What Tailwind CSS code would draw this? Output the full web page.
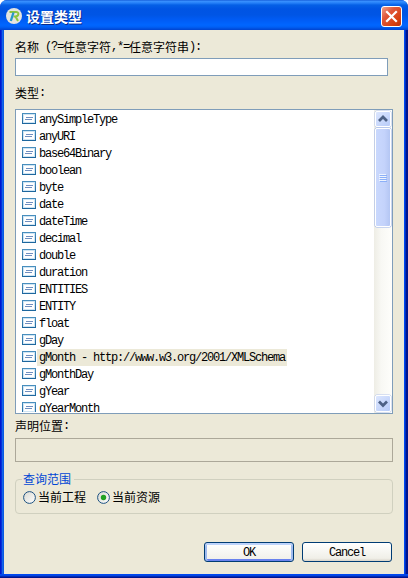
<!DOCTYPE html>
<html lang="zh">
<head>
<meta charset="utf-8">
<title>设置类型</title>
<script src="https://cdn.jsdelivr.net/npm/@tailwindcss/browser@4"></script>
</head>
<body class="w-[408px] h-[578px] overflow-hidden bg-white text-black text-[12px] leading-[14px] font-['Noto_Sans_CJK_SC',sans-serif]">
<svg width="0" height="0" class="absolute"><defs>
<linearGradient id="ib" x1="0" y1="0" x2="0" y2="1"><stop offset="0" stop-color="#4a90bf"/><stop offset="1" stop-color="#1b659c"/></linearGradient>
<linearGradient id="rb" x1="0" y1="0" x2="1" y2="1"><stop offset="0" stop-color="#d8d8d0"/><stop offset="1" stop-color="#fff"/></linearGradient>
<symbol id="type" viewBox="0 0 14 11"><rect width="14" height="11" fill="url(#ib)"/><rect x="1" y="1" width="12" height="9" fill="#cfe5f4"/><rect x="2" y="2" width="10" height="7" fill="#fff"/><path d="M4 4.500h7M3 6.500h7" stroke="#6f8fc0"/></symbol>
</defs></svg>
<div class="w-[408px] h-[578px] flex flex-col overflow-hidden rounded-t-[7px] bg-[linear-gradient(90deg,#0019cf_0,#0019cf_1px,#0831d9_1px,#0831d9_2px,#166aee_2px,#0855dd_4px,#0048f0_50%,#0048f0_405px,#001590_406px,#00138c_408px)]">
  <header class="h-[30px] shrink-0 flex items-center pl-[6px] pr-[6px] bg-[linear-gradient(180deg,#0a4fd0_0,#3c93ff_1px,#2580f8_3px,#0560e6_5px,#0054e3_9px,#0055e5_15px,#005cf5_20px,#0066ff_25px,#0060f5_27px,#0043cf_30px)]">
    <svg width="16" height="16" viewBox="0 0 16 16" class="mt-[2px] shrink-0"><circle cx="8" cy="8" r="8" fill="#e4e4e0"/><path d="M3.500 4h6.500c3.500 0 3 4-.5 4.500h-2M9.500 8.500l2.500 4.500" fill="none" stroke="#8cc63e" stroke-width="2"/><path d="M7.500 4.500L4.800 13" stroke="#2699c8" stroke-width="2.300"/></svg>
    <h1 class="ml-[4px] mt-[1px] text-[14px] leading-[16px] font-bold text-white [text-shadow:1px_1px_0_#0a2a8a]">设置类型</h1>
    <button class="ml-auto mt-[3px] w-[21px] h-[21px] shrink-0 rounded-[3px] border border-white bg-[linear-gradient(135deg,#f0a08a_0,#e0573a_35%,#d8400f_75%,#b83410_100%)]"><svg width="19" height="19" viewBox="0 0 19 19"><path d="M5 5l9 9M14 5l-9 9" stroke="#fff" stroke-width="2.200" stroke-linecap="square"/></svg></button>
  </header>
  <div class="h-[544px] shrink-0 ml-[4px] mr-[4px] bg-[#ece9d8] flex flex-col pl-[11px] pr-[11px] pt-[10px]">
    <label class="h-[14px] whitespace-pre flex"><span>名称</span><span class="mono"> (?=</span><span>任意字符</span><span class="mono">,*=</span><span>任意字符串</span><span class="mono">):</span></label>
    <input class="mt-[4px] w-[373px] h-[18px] border border-[#7f9db9] bg-white">
    <label class="mt-[10px] h-[14px] flex"><span>类型</span><span class="mono">:</span></label>
    <div class="mt-[9px] h-[305px] w-[378px] shrink-0 border border-[#7f9db9] bg-white flex">
      <ul id="list" class="flex-1 h-[302px] overflow-hidden pt-[1px] pl-[6px]"></ul>
      <div class="w-[18px] h-[303px] shrink-0 bg-[linear-gradient(90deg,#eeede5,#f8f8f4_40%,#fefefb)] flex flex-col justify-between">
        <div>
          <div class="ml-[1px] mt-[1px] w-[16px] h-[16px] rounded-[2px] border border-white bg-[linear-gradient(135deg,#dce6fe,#b8ccf9)] shadow-[0_0_0_0.5px_#b5c6ec]"><svg width="14" height="14" viewBox="0 0 14 14"><path d="M3 9l4-4 4 4" fill="none" stroke="#4d6185" stroke-width="2.700"/></svg></div>
          <div class="ml-[1px] mt-[1px] w-[16px] h-[99px] rounded-[2px] border border-white bg-[linear-gradient(90deg,#c9d8fd,#c4d3fb_60%,#b4c6f3)] shadow-[0_0_0_0.5px_#98b0e8] flex items-center justify-center"><svg width="8" height="8" viewBox="0 0 8 8"><path d="M0 .5h7M0 2.500h7M0 4.500h7M0 6.500h7" stroke="#eef4fe"/><path d="M1 1.500h7M1 3.500h7M1 5.500h7M1 7.500h7" stroke="#8cb0f8"/></svg></div>
        </div>
        <div class="ml-[1px] mb-[1px] w-[16px] h-[17px] rounded-[2px] border border-white bg-[linear-gradient(135deg,#dce6fe,#b8ccf9)] shadow-[0_0_0_0.5px_#b5c6ec]"><svg width="14" height="15" viewBox="0 0 14 15"><path d="M3 5.500l4 4 4-4" fill="none" stroke="#4d6185" stroke-width="2.700"/></svg></div>
      </div>
    </div>
    <label class="mt-[5px] h-[14px] flex"><span>声明位置</span><span class="mono">:</span></label>
    <div class="mt-[5px] h-[24px] w-[378px] shrink-0 border border-[#aca899]"></div>
    <fieldset class="mt-[10px] w-[378px] h-[42px] shrink-0 border border-[#d0d0bf] rounded-[4px] pl-[6px]">
      <legend class="pl-[1px] pr-[3px] h-[14px] text-[#0046d5]">查询范围</legend>
      <div class="flex items-center mt-[4px] h-[14px] pl-[1px]">
        <svg width="13" height="13" viewBox="0 0 13 13"><circle cx="6.500" cy="6.500" r="5.900" fill="url(#rb)" stroke="#1c5180"/></svg><span class="ml-[2px] w-[59px]">当前工程</span>
        <svg width="13" height="13" viewBox="0 0 13 13"><circle cx="6.500" cy="6.500" r="5.900" fill="url(#rb)" stroke="#1c5180"/><circle cx="6.500" cy="6.500" r="2.700" fill="#21a121"/></svg><span class="ml-[2px]">当前资源</span>
      </div>
    </fieldset>
    <div class="mt-[28px] ml-[189px] flex gap-[8px]">
      <button class="w-[90px] h-[20px] pb-[2px] rounded-[3px] border border-[#003c74] bg-[linear-gradient(#fff,#f0efe8)] shadow-[inset_0_2px_0_#bdd3fb,inset_2px_0_0_#a0bbee,inset_-2px_0_0_#a0bbee,inset_0_-2px_0_#6982ee] leading-[16px]"><span class="mono">OK</span></button>
      <button class="w-[90px] h-[20px] pb-[2px] rounded-[3px] border border-[#003c74] bg-[linear-gradient(#fff,#f0efe8_85%,#d8d3c8)] leading-[16px]"><span class="mono">Cancel</span></button>
    </div>
  </div>
  <div class="h-[4px] shrink-0 bg-[linear-gradient(#0048f0_0,#0048f0_1px,#0441d8_2px,#001590_3px,#00138c_4px)]"></div>
</div>
<script>
const names = ['anySimpleType','anyURI','base64Binary','boolean','byte','date','dateTime','decimal','double','duration','ENTITIES','ENTITY','float','gDay','gMonth - http://www.w3.org/2001/XMLSchema','gMonthDay','gYear','gYearMonth'];
document.getElementById('list').innerHTML = names.map((n, i) =>
  `<li class="h-[17px] flex"><svg class="mt-[2px] shrink-0" width="14" height="11"><use href="#type"/></svg><span class="ml-[1px] px-[2px] h-[17px] leading-[14px] whitespace-pre ${i === 14 ? 'bg-[#ece9d8]' : ''}"><span class="mono">${n}</span></span></li>`).join('');
document.querySelectorAll('.mono').forEach(e => e.classList.add("font-['Liberation_Mono',monospace]", 'text-[12px]', 'tracking-[-1.2px]'));
</script>
</body>
</html>
